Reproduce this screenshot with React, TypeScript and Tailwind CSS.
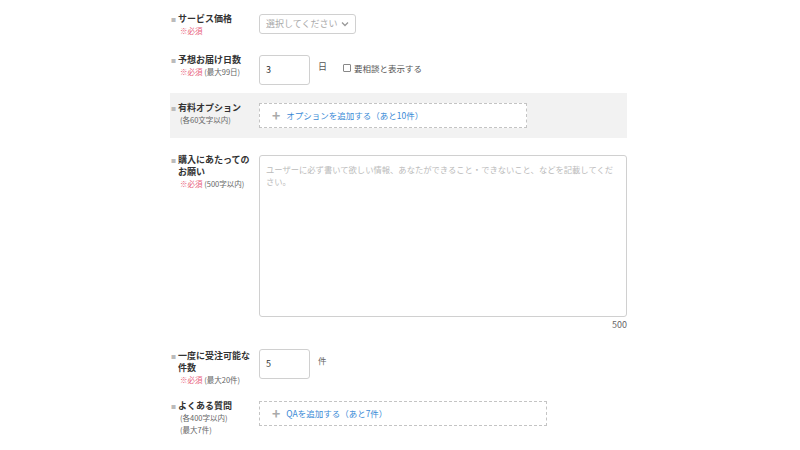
import React from "react";

const font = { fontFamily: '"Noto Sans CJK JP", "Noto Sans", sans-serif' };

const Label = ({ title, children }: { title: React.ReactNode; children?: React.ReactNode }) => (
  <div className="w-[89px] shrink-0 flex">
    <span className="w-[8px] shrink-0 pl-[1px] text-[5px] leading-[12px] text-[#bbb]">■</span>
    <div className="w-[76px]">
      <p className="text-[9px] leading-[12px] font-bold text-[#333]">{title}</p>
      {children}
    </div>
  </div>
);

const Sub = ({ req, note }: { req?: boolean; note?: string }) => (
  <p className="text-[7.5px] leading-[12px] text-[#666] pl-[2px]">
    {req && <span className="text-[#e8607a]">※必須</span>}
    {note && <span>{req ? " " : ""}{note}</span>}
  </p>
);

const AddBox = ({ text, w }: { text: string; w: string }) => (
  <div className={`${w} h-[25px] border border-dashed border-[#c4c4c4] bg-white flex items-center pl-[12px]`}>
    <span className="text-[14px] leading-none text-[#aaa] font-bold mr-[6px] -mt-[2px]">+</span>
    <span className="text-[8.5px] text-[#3a8ad6]">{text}</span>
  </div>
);

export default function App() {
  return (
    <div className="w-[800px] h-[450px] bg-white overflow-hidden" style={font}>
      <div className="ml-[170px] w-[457px] pt-[13px]">
        {/* サービス価格 */}
        <div className="flex">
          <Label title="サービス価格">
            <Sub req />
          </Label>
          <div className="mt-[1px] w-[97px] h-[20px] border border-[#d0d0d0] rounded-[3px] flex items-center px-[6px] justify-between">
            <span className="text-[9px] text-[#aaa]">選択してください</span>
            <svg width="8" height="6" viewBox="0 0 8 6">
              <path d="M1 1.5 L4 4.5 L7 1.5" stroke="#999" strokeWidth="1.3" fill="none" />
            </svg>
          </div>
        </div>

        {/* 予想お届け日数 */}
        <div className="flex mt-[17px]">
          <Label title="予想お届け日数">
            <Sub req note="(最大99日)" />
          </Label>
          <div className="mt-[1px] w-[51px] h-[30px] border border-[#d0d0d0] rounded-[3px] flex items-center pl-[6px] text-[9px] text-[#333]">
            3
          </div>
          <span className="ml-[8px] mt-[6px] text-[9px] text-[#555]">日</span>
          <div className="ml-[16px] mt-[8px] flex items-center h-[12px]">
            <span className="w-[8px] h-[8px] border border-[#888] rounded-[1px] mr-[3px]" />
            <span className="text-[8.5px] text-[#555]">要相談と表示する</span>
          </div>
        </div>

        {/* 有料オプション */}
        <div className="flex mt-[8px] bg-[#f2f2f2] h-[45px] pt-[9px]">
          <Label title="有料オプション">
            <Sub note="(各60文字以内)" />
          </Label>
          <div className="mt-[1px]">
            <AddBox text="オプションを追加する（あと10件）" w="w-[268px]" />
          </div>
        </div>

        {/* 購入にあたってのお願い */}
        <div className="flex mt-[16px]">
          <Label title="購入にあたってのお願い">
            <Sub req note="(500字以内)" />
          </Label>
          <div className="flex-1 mt-[1px]">
            <div className="h-[162px] border border-[#d0d0d0] rounded-[3px] px-[6px] pt-[7px]">
              <p className="text-[8.3px] leading-[12px] text-[#bbb]">
                ユーザーに必ず書いて欲しい情報、あなたができること・できないこと、などを記載してください。
              </p>
            </div>
            <p className="text-right text-[9px] leading-[14px] text-[#666] mt-[1px]">500</p>
          </div>
        </div>

        {/* 一度に受注可能な件数 */}
        <div className="flex mt-[18px]">
          <Label title="一度に受注可能な件数">
            <Sub req note="(最大20件)" />
          </Label>
          <div className="-mt-[1px] w-[51px] h-[30px] border border-[#d0d0d0] rounded-[3px] flex items-center pl-[6px] text-[9px] text-[#333]">
            5
          </div>
          <span className="ml-[8px] mt-[4px] text-[8.5px] text-[#666]">件</span>
        </div>

        {/* よくある質問 */}
        <div className="flex mt-[14px]">
          <Label title="よくある質問">
            <p className="text-[7.5px] leading-[12px] text-[#666] pl-[2px]">(各400字以内)</p>
            <p className="text-[7.5px] leading-[11px] text-[#666] pl-[2px]">(最大7件)</p>
          </Label>
          <div className="mt-[1px]">
            <AddBox text="QAを追加する（あと7件）" w="w-[288px]" />
          </div>
        </div>
      </div>
    </div>
  );
}
